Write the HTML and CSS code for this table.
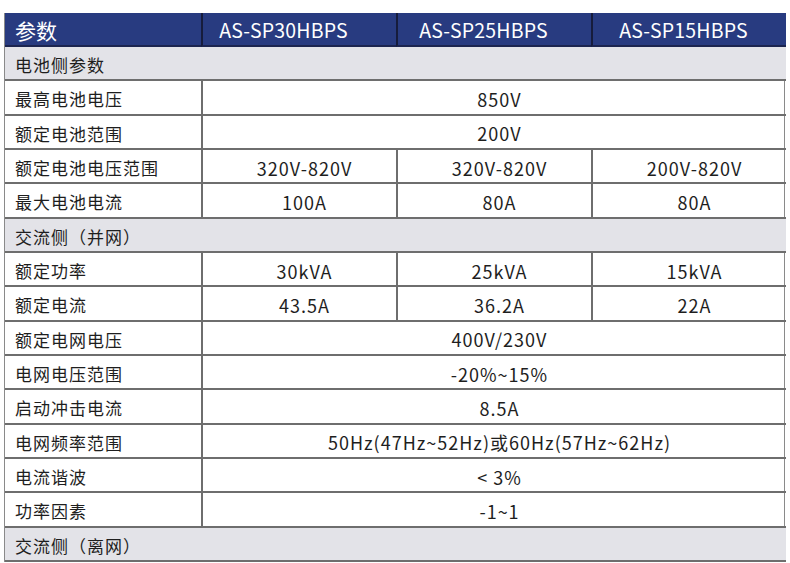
FILE: index.html
```html
<!DOCTYPE html>
<html lang="zh-CN">
<head>
<meta charset="utf-8">
<title>参数</title>
<link rel="stylesheet" href="styles.css">
</head>
<body>
<div class="spec">
  <div class="cell head first">参数</div>
  <div class="cell head h2">AS-SP30HBPS</div>
  <div class="cell head h3">AS-SP25HBPS</div>
  <div class="cell head h4">AS-SP15HBPS</div>

  <div class="cell section">电池侧参数</div>

  <div class="cell label">最高电池电压</div>
  <div class="cell val span3">850V</div>

  <div class="cell label">额定电池范围</div>
  <div class="cell val span3">200V</div>

  <div class="cell label">额定电池电压范围</div>
  <div class="cell val">320V-820V</div>
  <div class="cell val">320V-820V</div>
  <div class="cell val">200V-820V</div>

  <div class="cell label">最大电池电流</div>
  <div class="cell val">100A</div>
  <div class="cell val">80A</div>
  <div class="cell val">80A</div>

  <div class="cell section">交流侧（并网）</div>

  <div class="cell label">额定功率</div>
  <div class="cell val">30kVA</div>
  <div class="cell val">25kVA</div>
  <div class="cell val">15kVA</div>

  <div class="cell label">额定电流</div>
  <div class="cell val">43.5A</div>
  <div class="cell val">36.2A</div>
  <div class="cell val">22A</div>

  <div class="cell label">额定电网电压</div>
  <div class="cell val span3">400V/230V</div>

  <div class="cell label">电网电压范围</div>
  <div class="cell val span3">-20%~15%</div>

  <div class="cell label">启动冲击电流</div>
  <div class="cell val span3">8.5A</div>

  <div class="cell label">电网频率范围</div>
  <div class="cell val span3">50Hz(47Hz~52Hz)或60Hz(57Hz~62Hz)</div>

  <div class="cell label">电流谐波</div>
  <div class="cell val span3">&lt; 3%</div>

  <div class="cell label">功率因素</div>
  <div class="cell val span3">-1~1</div>

  <div class="cell section">交流侧（离网）</div>
</div>
</body>
</html>
```
FILE: styles.css
```css
html, body {
  margin: 0;
  padding: 0;
  background: #ffffff;
}

body {
  font-family: "Noto Sans CJK SC", "Noto Sans", sans-serif;
  color: #1e1e1e;
}

.spec {
  margin: 13px 0 0 4px;
  width: 781px;
  display: grid;
  grid-template-columns: 196px 195px 195px 195px;
  grid-template-rows: 34px;
  grid-auto-rows: 34.33px;
  border-left: 1px solid #8a8a8a;
  border-right: 1px solid #8a8a8a;
  box-sizing: border-box;
}

.cell {
  box-sizing: border-box;
  display: flex;
  align-items: center;
  border-bottom: 2px solid #6e6e6e;
  font-size: 17px;
  letter-spacing: 1px;
  line-height: 1;
  white-space: nowrap;
}

.val {
  border-left: 2px solid #6e6e6e;
}

.head {
  background: #283b80;
  color: #ffffff;
  font-size: 19.5px;
  letter-spacing: 0.2px;
  border-bottom: 2px solid #1c2550;
  border-left: 2px solid #161c3c;
  padding-top: 1px;
}

.head.first {
  border-left: none;
  font-size: 21px;
  letter-spacing: 0;
  padding-left: 10px;
  padding-top: 3px;
}

.h2 { justify-content: center; padding-right: 32px; }
.h3 { justify-content: center; padding-right: 22px; }
.h4 { justify-content: center; padding-right: 12px; }

.section {
  grid-column: 1 / -1;
  background: #e3e3e8;
  padding-left: 10px;
  padding-top: 3px;
}

.label {
  padding-left: 10px;
  padding-top: 3px;
}

.val {
  justify-content: center;
  font-size: 18px;
  padding-left: 10px;
  padding-top: 3px;
}

.span3 {
  grid-column: 2 / -1;
}
```
